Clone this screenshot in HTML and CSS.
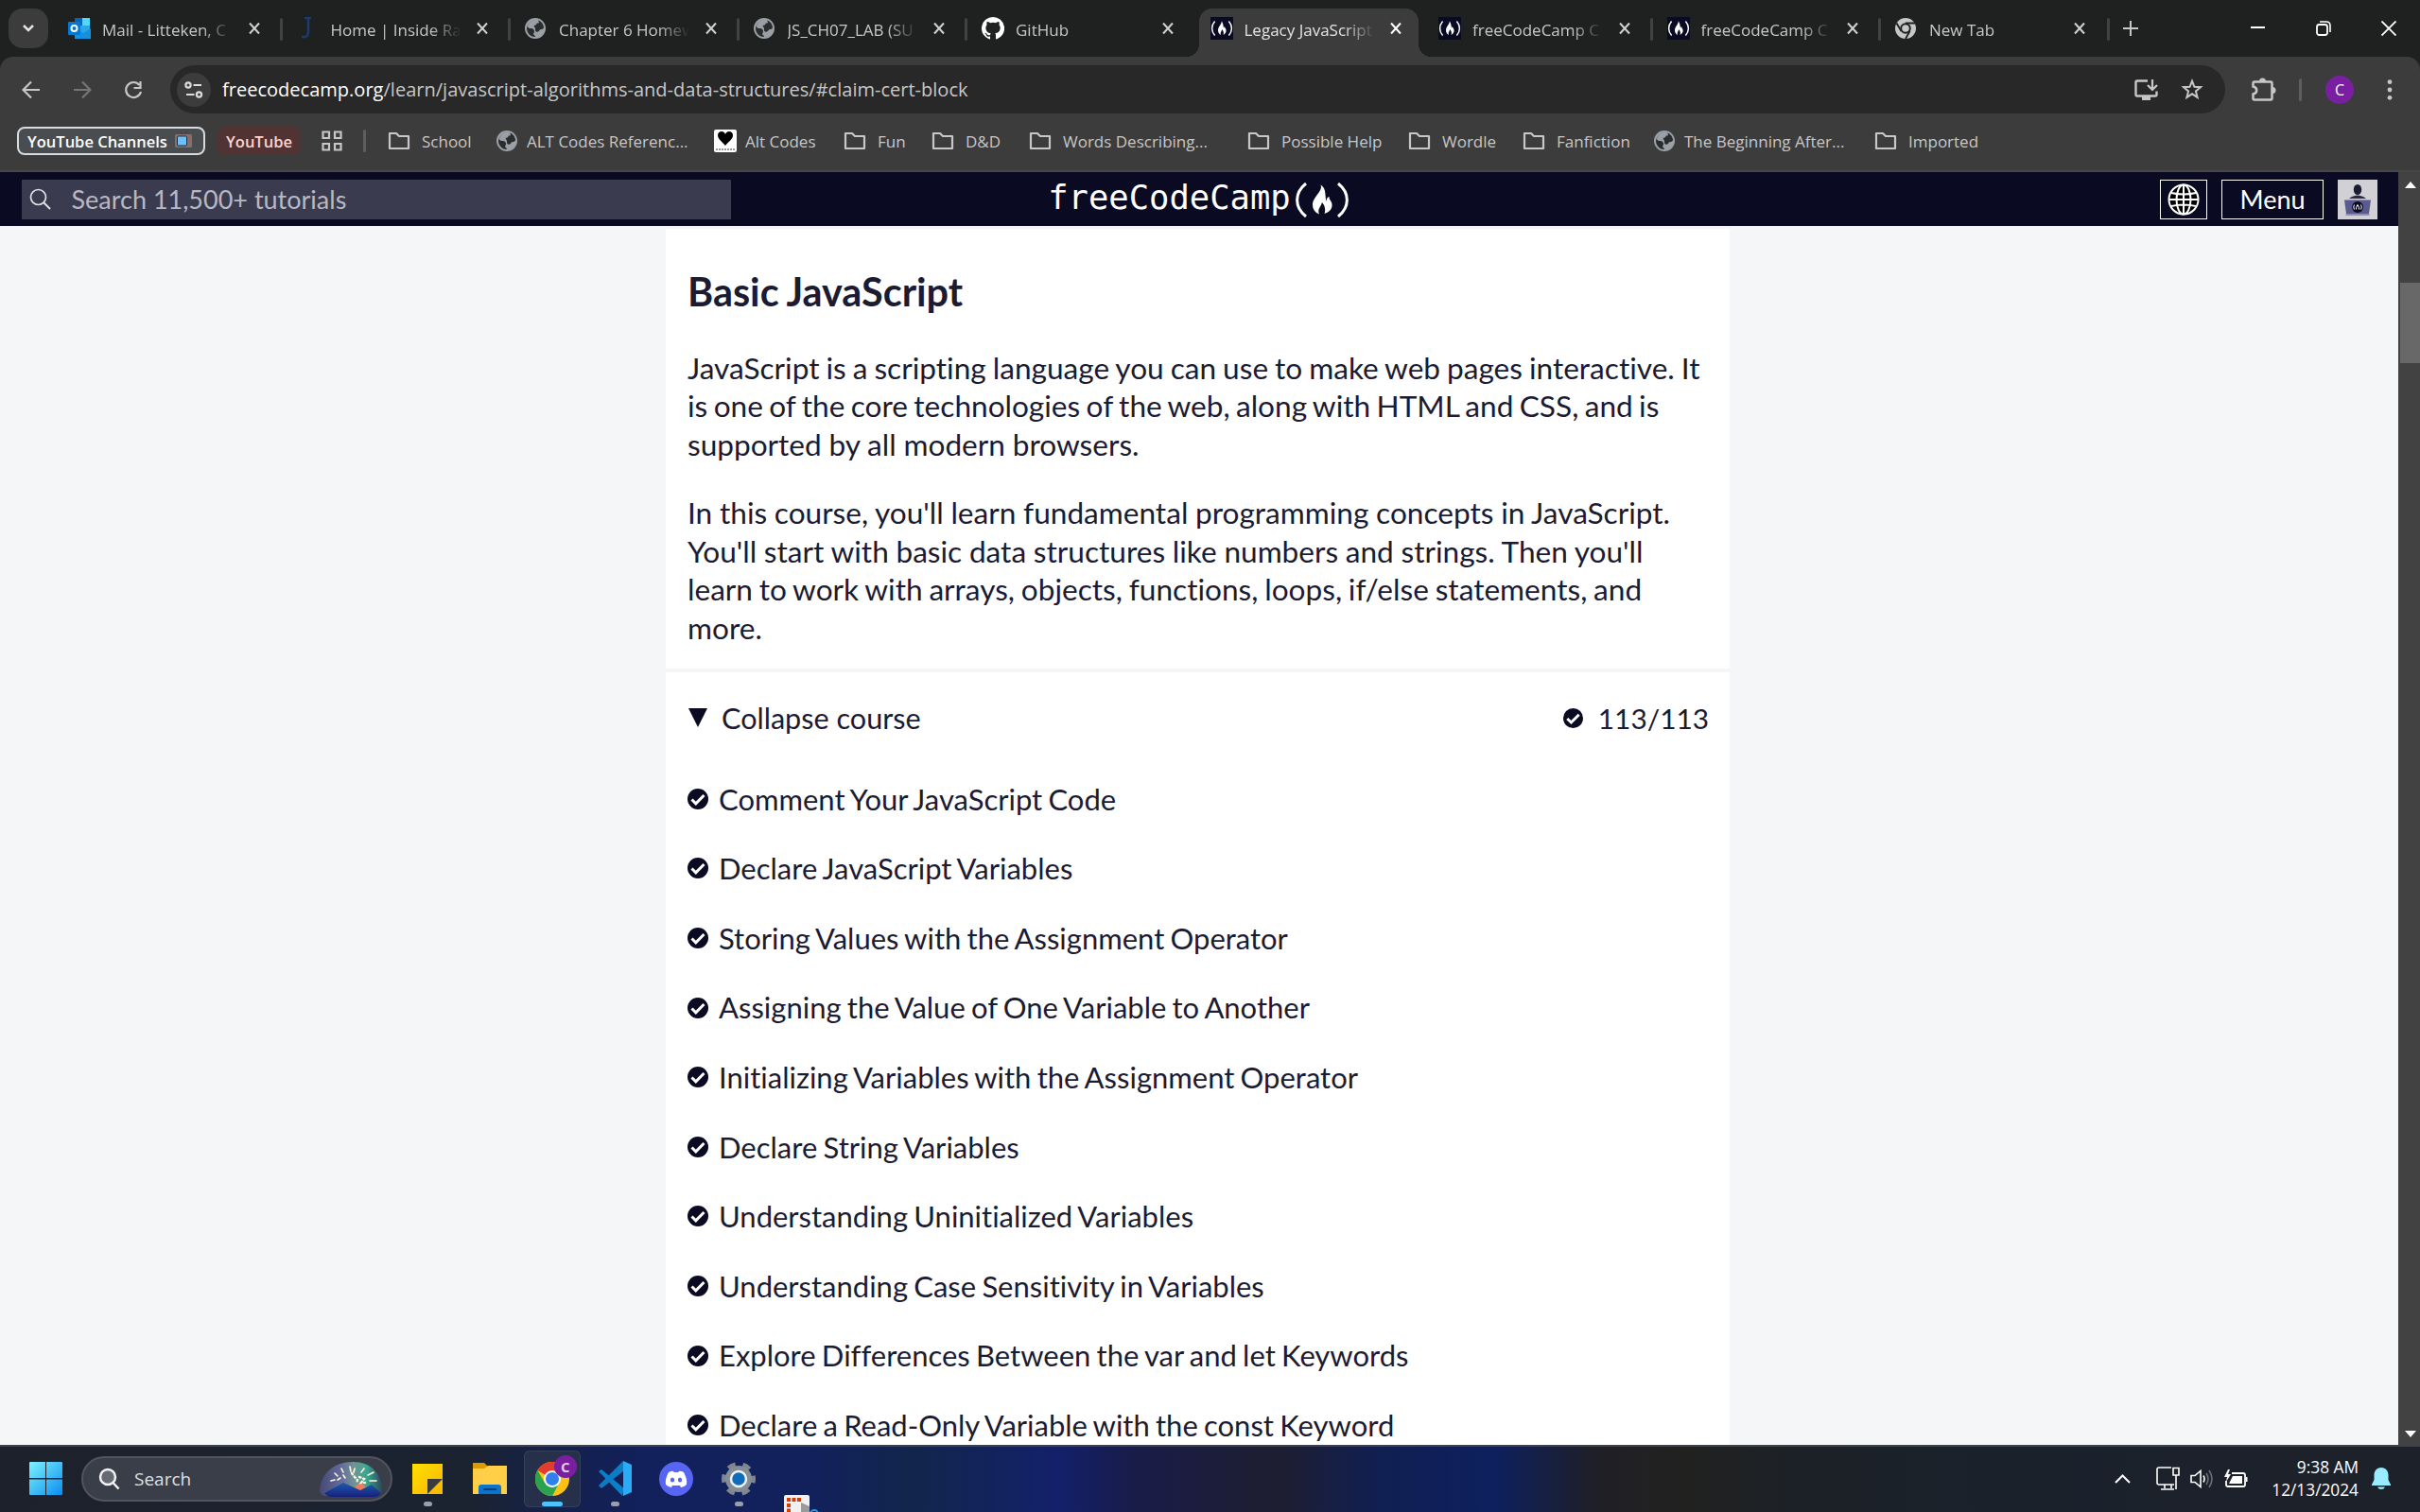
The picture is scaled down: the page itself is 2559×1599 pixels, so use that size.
FILE: index.html
```html
<!DOCTYPE html>
<html lang="en">
<head>
<meta charset="utf-8">
<title>Legacy JavaScript Algorithms and Data Structures</title>
<link rel="stylesheet" href="styles.css">
</head>
<body>
<svg class="defs" width="0" height="0" aria-hidden="true">
  <symbol id="x" viewBox="0 0 14 14"><path d="M2 1.5l10 11M12 1.5l-10 11" fill="none" stroke="currentColor" stroke-width="2"/></symbol>
  <symbol id="globe" viewBox="0 0 22 22"><circle cx="11" cy="11" r="11" fill="#9aa0a6"/><path d="M12 2c-4 0-7 2-9 6 0 3 2 3 4 3 1 0 3 1 3 3s-1 2-1 3 2 1 2 3c-6 0-9-5-9-9 1-6 6-9 10-9z" fill="#2b2c2d"/><path d="M14 2.500c4 1 6 5 6 8-1 2-3 1-4 2s-2 3-4 2 0-4-2-5c-1-1 0-2 1-2 2 0 1-2 2-2s2 0 2-1-1-1-1-2z" fill="#2b2c2d"/></symbol>
  <symbol id="fcc" viewBox="0 0 24 24"><rect width="24" height="24" fill="#0a0a23"/><path d="M4.600 4.500C.6 9 .6 15 4.600 19.500M19.400 4.500c4 4.500 4 10.500 0 15" fill="none" stroke="#fff" stroke-width="1.500"/><path d="M11.500 4c1.500 2.500-3.500 6-3.500 10 0 2.500 1.500 4.500 3 5-1-3 1-4 1.200-6 1.300 1.500 2.300 4 1.300 6 2-1 3.500-3 3-5.500-.3-1.500-1.500-2-1.500-3.500-.8.500-1 1.500-1 2C13.500 9 13.500 6 11.500 4z" fill="#fff"/></symbol>
  <symbol id="folder" viewBox="0 0 24 20"><path d="M2 2h7l3 3h10v13H2z" fill="none" stroke="#c7c7c7" stroke-width="2.200" stroke-linejoin="round"/></symbol>
  <symbol id="check" viewBox="0 0 22 22"><circle cx="11" cy="11" r="11" fill="#0a0a23"/><path d="M4.500 11.500l4.300 4.300L17.500 7" fill="none" stroke="#fff" stroke-width="3"/></symbol>
</svg>

<div class="tabstrip">
  <button class="tab-search"><svg width="14" height="10" viewBox="0 0 14 10"><path d="M2 2l5 5 5-5" fill="none" stroke="#e3e3e3" stroke-width="2.500"/></svg></button>
  <div class="tabs">
    <div class="tab"><svg class="fav" viewBox="0 0 24 24"><path d="M7 1h16v20H7z" fill="#28a8ea"/><path d="M7 1h8v8H7z" fill="#0364b8"/><path d="M15 1h8v8h-8z" fill="#50d9ff"/><path d="M7 12l9 5 8-5v11H7z" fill="#1490df"/><rect y="5" width="13" height="14" rx="1" fill="#0078d4"/><circle cx="6.500" cy="12" r="3" fill="none" stroke="#fff" stroke-width="2"/></svg><span class="title">Mail - Litteken, C</span><svg class="close"><use href="#x"/></svg></div>
    <div class="tab"><svg class="fav" viewBox="0 0 24 24"><path d="M8 1h7M12 1v15q0 6-7 5" fill="none" stroke="#1f3a6e" stroke-width="2.500"/></svg><span class="title">Home | Inside Ra</span><svg class="close"><use href="#x"/></svg></div>
    <div class="tab"><svg class="fav g"><use href="#globe"/></svg><span class="title">Chapter 6 Homew</span><svg class="close"><use href="#x"/></svg></div>
    <div class="tab"><svg class="fav g"><use href="#globe"/></svg><span class="title">JS_CH07_LAB (SU</span><svg class="close"><use href="#x"/></svg></div>
    <div class="tab noline"><svg class="fav" viewBox="0 0 16 16"><path fill="#fff" d="M8 0a8 8 0 0 0-2.530 15.590c.4.070.55-.17.55-.38v-1.490c-2.010.37-2.530-.49-2.690-.94-.09-.23-.48-.94-.82-1.130-.28-.15-.68-.52-.01-.53.63-.01 1.080.58 1.230.82.72 1.210 1.870.87 2.330.66.07-.52.28-.87.51-1.070-1.780-.2-3.640-.89-3.640-3.950 0-.87.31-1.590.82-2.150-.08-.2-.36-1.020.08-2.120 0 0 .67-.21 2.200.82a7.600 7.600 0 0 1 4 0c1.530-1.040 2.200-.82 2.200-.82.44 1.100.16 1.920.08 2.120.51.56.82 1.270.82 2.150 0 3.070-1.870 3.750-3.650 3.950.29.25.54.73.54 1.480v2.200c0 .21.150.46.55.38A8 8 0 0 0 8 0z"/></svg><span class="title">GitHub</span><svg class="close"><use href="#x"/></svg></div>
    <div class="tab active"><svg class="fav"><use href="#fcc"/></svg><span class="title">Legacy JavaScript</span><svg class="close"><use href="#x"/></svg></div>
    <div class="tab"><svg class="fav"><use href="#fcc"/></svg><span class="title">freeCodeCamp C</span><svg class="close"><use href="#x"/></svg></div>
    <div class="tab"><svg class="fav"><use href="#fcc"/></svg><span class="title">freeCodeCamp C</span><svg class="close"><use href="#x"/></svg></div>
    <div class="tab"><svg class="fav g" viewBox="0 0 22 22"><circle cx="11" cy="11" r="11" fill="#c7c7c7"/><circle cx="11" cy="11" r="4.800" fill="#c7c7c7" stroke="#1f2020" stroke-width="2"/><path d="M11 5.500h10M6.500 14L1.500 5.500M15.500 14L11 22" stroke="#1f2020" stroke-width="1.800"/></svg><span class="title">New Tab</span><svg class="close"><use href="#x"/></svg></div>
  </div>
  <svg class="plus" width="16" height="16" viewBox="0 0 16 16"><path d="M8 0v16M0 8h16" stroke="#c7c7c7" stroke-width="2"/></svg>
  <div class="win">
    <svg width="16" height="16" viewBox="0 0 16 16"><path d="M0 7h15" stroke="#fff" stroke-width="2"/></svg>
    <svg width="16" height="16" viewBox="0 0 16 16"><rect x="1" y="4" width="11" height="11" rx="2.500" fill="none" stroke="#fff" stroke-width="1.800"/><path d="M4 1h7q4 0 4 4v7" fill="none" stroke="#fff" stroke-width="1.600"/></svg>
    <svg width="16" height="16" viewBox="0 0 16 16"><path d="M.5.5l15 15M15.500.5l-15 15" stroke="#fff" stroke-width="1.800"/></svg>
  </div>
</div>

<div class="toolbar">
  <div class="nav-icons">
    <svg width="20" height="20" viewBox="0 0 20 20"><path d="M19 10H2M10 1.500L1.500 10l8.500 8.500" fill="none" stroke="#c7c7c7" stroke-width="2.200"/></svg>
    <svg width="20" height="20" viewBox="0 0 20 20"><path d="M1 10h17M10 1.500l8.500 8.500-8.500 8.500" fill="none" stroke="#757575" stroke-width="2.200"/></svg>
    <svg width="20" height="20" viewBox="0 0 20 20"><path d="M16.500 5A8 8 0 1 0 18 12M17.500 1v7h-7" fill="none" stroke="#c7c7c7" stroke-width="2.200"/></svg>
  </div>
  <div class="omnibox">
    <span class="site-info"><svg width="20" height="18" viewBox="0 0 20 18"><g fill="none" stroke="#dcdcdc" stroke-width="2.200"><circle cx="4" cy="4" r="2.600"/><path d="M9.500 4H18M2 14h8.500"/><circle cx="15.500" cy="14" r="2.600"/></g></svg></span>
    <span class="url"><b>freecodecamp.org</b>/learn/javascript-algorithms-and-data-structures/#claim-cert-block</span>
    <svg class="install" width="25" height="22" viewBox="0 0 25 22"><path d="M14 1.500H3Q1.500 1.500 1.500 3v13Q1.500 17.500 3 17.500h19q1.500 0 1.500-1.500v-3.500" fill="none" stroke="#c7c7c7" stroke-width="2.400"/><path d="M8 18h9v4H8z" fill="#c7c7c7"/><path d="M19 0v10M14 6l5 5 5-5" fill="none" stroke="#c7c7c7" stroke-width="2.200"/></svg>
    <svg width="24" height="23" viewBox="0 0 24 23"><path d="M12 2.700l2.400 6.100 6.600.4-5.100 4.200 1.700 6.500L12 16.300l-5.600 3.600 1.700-6.500L3 9.200l6.600-.4z" fill="none" stroke="#c7c7c7" stroke-width="2"/></svg>
  </div>
  <div class="tools">
    <svg width="26" height="26" viewBox="0 0 26 26"><path d="M3 4.500h17q1.500 0 1.500 1.500v16q0 1.500-1.500 1.500H3q-1.500 0-1.500-1.500v-4.500c5-1 5-7 0-8V6q0-1.500 1.500-1.500z" fill="none" stroke="#c7c7c7" stroke-width="2.500"/><path d="M8 4a3.500 3.500 0 0 1 7 0zM22 10a3.500 3.500 0 0 1 0 7z" fill="#c7c7c7"/></svg>
    <i class="sep"></i>
    <span class="profile">C</span>
    <svg width="6" height="22" viewBox="0 0 6 22"><g fill="#c7c7c7"><circle cx="3" cy="2.700" r="2.400"/><circle cx="3" cy="11" r="2.400"/><circle cx="3" cy="19.300" r="2.400"/></g></svg>
  </div>
</div>

<div class="bookmarks">
  <div><span class="group channels">YouTube Channels <svg width="18" height="20" viewBox="0 0 18 20"><path d="M5 0l4 4 4-4" fill="none" stroke="#444" stroke-width="1.500"/><rect x="0" y="3" width="18" height="14" rx="1.500" fill="#82716f"/><rect x="2.500" y="5" width="10" height="10" rx="1" fill="#6cc0fb" stroke="#233" stroke-width="1"/><path d="M14 6h2M14 9h2" stroke="#b55" stroke-width="1.200"/></svg></span></div>
  <div><span class="group yt">YouTube</span></div>
  <div><svg width="22" height="22" viewBox="0 0 22 22"><g fill="none" stroke="#c7c7c7" stroke-width="2.200"><path d="M1.500 1.500h6.500v6.500H1.500zM14 1.500h6.500v6.500H14zM1.500 14h6.500v6.500H1.500zM14 14h6.500v6.500H14z"/></g></svg></div>
  <div><i class="sep"></i></div>
  <div class="bm"><svg class="fo"><use href="#folder"/></svg>School</div>
  <div class="bm"><svg class="gl"><use href="#globe"/></svg>ALT Codes Referenc...</div>
  <div class="bm alt"><svg width="24" height="24" viewBox="0 0 24 24"><rect width="24" height="24" rx="2" fill="#fff"/><path d="M12 17C8 12 4 10 4 6c0-4 6-6 8-1 2-5 8-3 8 1 0 4-4 6-8 11z" fill="#000"/><path d="M2 21h20" stroke="#999" stroke-width="2" stroke-dasharray="2 1"/></svg>Alt Codes</div>
  <div class="bm"><svg class="fo"><use href="#folder"/></svg>Fun</div>
  <div class="bm"><svg class="fo"><use href="#folder"/></svg>D&amp;D</div>
  <div class="bm"><svg class="fo"><use href="#folder"/></svg>Words Describing...</div>
  <div class="bm"><svg class="fo"><use href="#folder"/></svg>Possible Help</div>
  <div class="bm"><svg class="fo"><use href="#folder"/></svg>Wordle</div>
  <div class="bm"><svg class="fo"><use href="#folder"/></svg>Fanfiction</div>
  <div class="bm"><svg class="gl"><use href="#globe"/></svg>The Beginning After...</div>
  <div class="bm"><svg class="fo"><use href="#folder"/></svg>Imported</div>
</div>

<div class="viewport">
  <div class="page">
    <header class="site-header">
      <div class="search"><svg width="24" height="24" viewBox="0 0 24 24"><circle cx="9.500" cy="9.500" r="8" fill="none" stroke="#e0e0e6" stroke-width="1.700"/><path d="M15 15l7 7" stroke="#e0e0e6" stroke-width="2"/></svg>Search 11,500+ tutorials</div>
      <div class="logo"><span>freeCodeCamp</span><svg width="56" height="37" viewBox="0 0 56 37"><path d="M11 1C-1.500 11-1.500 26 11 36M45 1c12.500 10 12.500 25 0 35" fill="none" stroke="#fff" stroke-width="3"/><path d="M26.500 2.500c3 6-8.500 13-8.500 21 0 5 3 8.500 7 10-2.500-6 2.500-8 2.800-12.500C31 24 32 29 30.500 33c5-1.500 8.500-5 8-10-.4-4-3-4-3-8-2.500.5-3 3-2.700 5C30.500 17 33.500 6 26.500 2.500z" fill="#fff"/></svg></div>
      <div class="actions">
        <button class="lang"><svg width="34" height="34" viewBox="0 0 34 34"><circle cx="17" cy="17" r="15.500" fill="#000"/><g fill="none" stroke="#fff" stroke-width="2"><circle cx="17" cy="17" r="15.500"/><ellipse cx="17" cy="17" rx="7.500" ry="15.500"/><path d="M17 1v32M1.500 17h31M4 10q13 3 26 0M4 24q13-3 26 0"/></g></svg></button>
        <button class="menu">Menu</button>
        <svg width="42" height="42" viewBox="0 0 42 42"><rect width="42" height="42" fill="#d0d0d5"/><ellipse cx="21" cy="10.500" rx="4.200" ry="5.500" fill="#1b1b32"/><path d="M12 20q3-3 9-3.500 6 .5 9 3.500z" fill="#2a2a40"/><path d="M7 21.500h28L33 36H9z" fill="#5a5a8f"/><path d="M8.500 36h25v2h-25z" fill="#8f8fbd"/><circle cx="21" cy="29" r="6" fill="#0a0a23"/><path d="M17.500 26.500q-1.500 2.500 0 5M24.500 26.500q1.500 2.500 0 5M19.500 31.500q-.5-2 1.500-5 2 3 1.500 5" fill="none" stroke="#fff"/></svg>
      </div>
    </header>
    <main>
      <section class="intro">
        <h3>Basic JavaScript</h3>
        <p class="lead">JavaScript is a scripting language you can use to make web pages interactive. It<br><span class="snug">is one of the core technologies of the web, along with HTML and CSS, and is</span><br><span class="roomy">supported by all modern browsers.</span></p>
        <p>In this course, you'll learn fundamental programming concepts in JavaScript.<br>You'll start with basic data structures like numbers and strings. Then you'll<br><span class="tight">learn to work with arrays, objects, functions, loops, if/else statements, and</span><br>more.</p>
      </section>
      <section class="course">
        <div class="toggle"><svg width="20" height="20" viewBox="0 0 20 20"><path d="M0 0h20L10 20z" fill="#0a0a23"/></svg><span>Collapse course</span><span class="count"><svg width="21" height="21"><use href="#check"/></svg>113/113</span></div>
        <ul>
          <li><svg><use href="#check"/></svg>Comment Your JavaScript Code</li>
          <li><svg><use href="#check"/></svg>Declare JavaScript Variables</li>
          <li><svg><use href="#check"/></svg>Storing Values with the Assignment Operator</li>
          <li><svg><use href="#check"/></svg>Assigning the Value of One Variable to Another</li>
          <li><svg><use href="#check"/></svg>Initializing Variables with the Assignment Operator</li>
          <li><svg><use href="#check"/></svg>Declare String Variables</li>
          <li><svg><use href="#check"/></svg>Understanding Uninitialized Variables</li>
          <li><svg><use href="#check"/></svg>Understanding Case Sensitivity in Variables</li>
          <li><svg><use href="#check"/></svg>Explore Differences Between the var and let Keywords</li>
          <li><svg><use href="#check"/></svg>Declare a Read-Only Variable with the const Keyword</li>
        </ul>
      </section>
    </main>
  </div>
  <div class="scrollbar">
    <svg width="12" height="7" viewBox="0 0 12 7"><path d="M0 7h12L6 0z" fill="#fff"/></svg>
    <i class="thumb"></i>
    <svg width="12" height="7" viewBox="0 0 12 7"><path d="M0 0h12L6 7z" fill="#fff"/></svg>
  </div>
</div>

<div class="taskbar">
  <svg class="start" width="35" height="35" viewBox="0 0 35 35"><defs><linearGradient id="w" x1="0" y1="0" x2="1" y2="1"><stop offset="0" stop-color="#7df3fd"/><stop offset="1" stop-color="#0a8df0"/></linearGradient></defs><path d="M0 1q0-1 1-1h16v17H0zM18 0h16q1 0 1 1v16H18zM0 18.500h17V35H1q-1 0-1-1zM18 18.500h17V34q0 1-1 1H18z" fill="url(#w)"/></svg>
  <div class="tsearch">
    <svg width="24" height="24" viewBox="0 0 24 24"><circle cx="10" cy="10" r="8" fill="#666a72" stroke="#f2f2f2" stroke-width="2.500"/><path d="M15.500 16l6 6.500" stroke="#f2f2f2" stroke-width="2.500"/></svg>
    <span>Search</span>
    <svg class="art" width="68" height="38" viewBox="0 0 68 38"><defs><linearGradient id="sky"><stop offset="0" stop-color="#484b80"/><stop offset=".35" stop-color="#7078b0"/><stop offset=".55" stop-color="#7fa8a8"/><stop offset=".75" stop-color="#39c3a0"/><stop offset="1" stop-color="#2a4a66"/></linearGradient><linearGradient id="mt" x1="0" y1="0" x2="0" y2="1"><stop offset="0" stop-color="#1c5cae"/><stop offset="1" stop-color="#17207c"/></linearGradient></defs><path d="M1 32C1 14 16 1 36 1s31 13 31 31q-1 5-6 5H9q-7 0-8-5z" fill="url(#sky)" opacity=".8"/><path d="M36 30l8-8 8 8-8 4z" fill="#f07a60"/><path d="M6 34L26 23l18 8 12-6 10 9q-2 4-8 4H14q-5 0-8-4z" fill="url(#mt)"/><g fill="none" stroke="#fffbe0" stroke-linecap="round"><path d="M13 21l4-1M17 13l3 3M24 8l2 4M33 6l1 5M20 20l3-2M26 15l2 3M45 12l3-4M52 15l6-3M54 21h7M38 8l-1 4" stroke-width="1.600"/><path d="M35 13l3 4 3 3-1 4M43 17l5 2-3 4 4 0" stroke-width="2.400" stroke-dasharray="1.500 3"/></g></svg>
  </div>
  <div class="app"><svg width="32" height="32" viewBox="0 0 32 32"><defs><linearGradient id="st" x1="0" y1="0" x2="1" y2="1"><stop offset="0" stop-color="#ffe100"/><stop offset="1" stop-color="#f9b500"/></linearGradient></defs><path d="M0 0h32v32H0z" fill="url(#st)"/><path d="M16 16h16L16 32z" fill="#3c3c3c"/></svg><i></i></div>
  <div class="app"><svg width="36" height="33" viewBox="0 0 36 33"><path d="M0 0h12l4 4H36v10H0z" fill="#dc9a00"/><path d="M0 6h12l4-3h20v30H0z" fill="#ffcf48"/><path d="M6 33V26q0-3 3-3h18q3 0 3 3v7z" fill="#0b74ca"/><path d="M11 28h14" stroke="#053d7c" stroke-width="2"/></svg></div>
  <div class="app on"><svg width="36" height="36" viewBox="0 0 36 36"><circle cx="18" cy="18" r="18" fill="#fbc116"/><path d="M18 18L2.400 9A18 18 0 0 1 33.600 9z" fill="#e33b2e"/><path d="M2.400 9A18 18 0 0 0 18 36l7.500-14L10 22z" fill="#2ba24c"/><circle cx="18" cy="18" r="9" fill="#fff"/><circle cx="18" cy="18" r="7" fill="#2f80ed"/></svg><b>C</b><i></i></div>
  <div class="app"><svg width="36" height="37" viewBox="0 0 36 37"><path d="M1 11l3-2 24 20-2 8z" fill="#0a7fcb"/><path d="M1 26l3 3L27 11V0z" fill="#0e7cc4"/><path d="M27 0l9 4v29l-9 4z" fill="#2aabf5"/></svg><i></i></div>
  <div class="app"><svg width="36" height="36" viewBox="0 0 36 36"><circle cx="18" cy="18" r="18" fill="#5865f2"/><path d="M10 11q4-2 5-1l1 1h4l1-1q2-1 5 1 4 7 3 13-3 3-6 3l-1-2h-8l-1 2q-3 0-6-3-1-6 3-13z" fill="#fff"/><ellipse cx="14" cy="19" rx="2.200" ry="2.500" fill="#5865f2"/><ellipse cx="22" cy="19" rx="2.200" ry="2.500" fill="#5865f2"/></svg></div>
  <div class="app"><svg width="36" height="36" viewBox="0 0 36 36"><circle cx="18" cy="18" r="15.500" fill="none" stroke="#7e868f" stroke-width="5" stroke-dasharray="8.230 8" stroke-dashoffset="4"/><circle cx="18" cy="18" r="11" fill="none" stroke="#858d96" stroke-width="6"/><circle cx="18" cy="18" r="8" fill="#0f6cbd" stroke="#f0f0f0" stroke-width="2.500"/></svg><i></i></div>
  <svg class="snip" width="36" height="18" viewBox="0 0 36 18"><rect width="27" height="30" rx="2" fill="#f1f1f1"/><path d="M18 8l9 4v6h-9z" fill="#9a9a9a"/><path d="M3 5h16" stroke="#d83b01" stroke-width="4" stroke-dasharray="4 1.500"/><path d="M5 9v9" stroke="#d83b01" stroke-width="4" stroke-dasharray="4 1.500"/><circle cx="32" cy="20" r="4" fill="none" stroke="#1e9be8" stroke-width="2"/></svg>
  <div class="tray">
    <svg width="17" height="10" viewBox="0 0 17 10"><path d="M1 9l7.500-7.500L16 9" fill="none" stroke="#fff" stroke-width="2"/></svg>
    <svg width="25" height="25" viewBox="0 0 25 25"><g fill="none" stroke="#fff" stroke-width="1.600"><path d="M16 1H3Q1 1 1 3v14q0 2 2 2h16M9 19v4M16 19v4M5 24h14M18 1.500h6V9h-6zM21 9v15"/></g></svg>
    <svg width="25" height="20" viewBox="0 0 25 20"><g fill="none" stroke="#fff" stroke-width="1.600"><path d="M1 6.500h4l6-5v17l-6-5H1zM14 6.500q2 3.500 0 7"/><path d="M17 4q4 6 0 12M20 1q6 9 0 18" stroke="#6a6f78"/></g></svg>
    <svg width="25" height="20" viewBox="0 0 25 20"><path d="M8 4h12q2 0 2 2v10q0 2-2 2H4q-2 0-2-2v-4" fill="none" stroke="#fff" stroke-width="1.800"/><path d="M9 7h10v8H5zM23 8h1.500v5H23zM4 0L0 8h3l-1 5 5-8H4l2-5z" fill="#fff"/></svg>
    <div class="clock">9:38 AM<br>12/13/2024</div>
    <svg width="20" height="24" viewBox="0 0 20 24"><path d="M10 0C5 0 2.500 4 2.500 8v5L0 18v1h20v-1l-2.500-5V8c0-4-2.500-8-7.500-8zM6 20.500h8q-1 2.500-4 2.500t-4-2.500z" fill="#99ebff"/></svg>
  </div>
</div>
</body>
</html>
```
FILE: styles.css
```css
* { box-sizing: border-box; }
html, body { margin: 0; height: 100%; overflow: hidden; }
body {
  display: flex;
  flex-direction: column;
  width: 2559px;
  height: 1599px;
  background: #1f2020;
  font-family: "Open Sans", sans-serif;
  font-size: 17px;
  font-variant-ligatures: none;
  color: #c7c7c7;
}
svg { display: block; flex: none; }
button { font: inherit; color: inherit; background: none; border: 0; padding: 0; display: flex; align-items: center; justify-content: center; }
.defs { position: absolute; }

/* Tab strip */
.tabstrip { height: 60px; flex: none; display: flex; background: #1f2120; padding-left: 9px; }
.tab-search { width: 42px; height: 42px; margin: 9px 9px 0 0; border-radius: 15px; background: #3c3c3c; }
.tabs { display: flex; padding-top: 9px; }
.tab { position: relative; width: 241.500px; height: 51px; display: flex; align-items: center; padding: 0 26px 9px 12px; }
.tab:not(.active)::after { content: ""; position: absolute; right: 3px; top: 10px; width: 3px; height: 24px; border-radius: 2px; background: #414242; }
.tab.noline::after { display: none; }
.fav { width: 24px; height: 24px; margin-right: 12px; }
.fav.g { width: 22px; height: 22px; margin-right: 14px; }
.title {
  flex: 1; width: 0; white-space: nowrap; margin-right: 12px; padding-top: 2px;
  -webkit-mask-image: linear-gradient(90deg, #000 105px, transparent 138px);
  mask-image: linear-gradient(90deg, #000 105px, transparent 138px);
}
.close { width: 14px; height: 14px; color: #d0d0d0; }
.tab:last-child { padding-right: 27.500px; }
.active { background: #3c3c3c; border-radius: 14px 14px 0 0; color: #e3e3e3; width: 232px; margin: 0 9.500px 0 0; padding-right: 16.500px; }
.active .close { color: #fff; }
.active::before, .active::after { content: ""; position: absolute; bottom: 0; width: 14px; height: 14px; }
.active::before { left: -14px; background: radial-gradient(circle at 0 0, transparent 14px, #3c3c3c 14.500px); }
.active::after { right: -14px; background: radial-gradient(circle at 100% 0, transparent 14px, #3c3c3c 14.500px); }
.plus { margin: 22px 0 0 11px; }
.win { display: flex; gap: 53px; margin: 22px 25px 0 auto; }

/* Toolbar */
.toolbar { height: 60px; flex: none; display: flex; align-items: center; background: #3c3c3c; border-radius: 14px 14px 0 0; }
.nav-icons { display: flex; gap: 34px; width: 180px; padding: 9px 0 0 23px; }
.omnibox { width: 2173px; height: 51px; margin-top: 9px; border-radius: 26px; background: #282828; display: flex; align-items: center; padding: 0 23px 0 7px; }
.site-info { width: 36px; height: 36px; border-radius: 50%; background: #3c3c3c; display: grid; place-items: center; margin-right: 12px; }
.url { font-size: 20.050px; flex: 1; }
.url b { font-weight: 400; color: #fff; }
.install { margin-right: 24px; }
.tools { display: flex; align-items: center; padding: 9px 0 0 28px; flex: 1; }
.sep { display: block; width: 3px; height: 24px; border-radius: 2px; background: #5e5e5e; }
.tools .sep { margin: 0 25px 0 24px; }
.profile { width: 30px; height: 30px; border-radius: 50%; background: #7b1fa2; color: #fff; font-size: 16px; display: grid; place-items: center; margin-right: 35px; }

/* Bookmarks */
.bookmarks {
  height: 62px; flex: none; background: #3c3c3c; border-bottom: 2px solid #474747; padding: 0 0 2px 18px;
  display: grid; align-items: center;
  grid-template-columns: 212px 110px 44px 26px 115px 230px 137px 93px 103px 231px 170px 121px 139px 233px 1fr;
}
.bm, .group { display: flex; align-items: center; white-space: nowrap; }
.fo { width: 24px; height: 20px; margin-right: 12px; }
.gl { width: 22px; height: 22px; margin-right: 10px; }
.alt svg { margin-right: 9px; }
.group { height: 30px; width: max-content; border-radius: 8px; font-weight: 600; font-size: 16.500px; color: #fff; }
.channels { width: 199px; border: 2px solid #d8dbde; background: #4a4d50; padding-left: 9px; gap: 8px; }
.yt { background: #503332; color: #ffd3ce; width: 88px; justify-content: center; }

/* Web page */
.viewport { height: 1346px; flex: none; display: flex; font-family: "Lato", sans-serif; }
.page { width: 2536px; overflow: hidden; background: #f5f6f7; color: #1b1b32; }
.site-header { height: 57px; background: #0a0a23; display: grid; grid-template-columns: 1fr auto 1fr; align-items: center; padding: 0 22px 0 23px; font-size: 27px; color: #fff; }
.search { width: 750px; height: 42px; background: #3b3b4f; color: #b8b8c4; display: flex; align-items: center; gap: 20.500px; padding-left: 8px; }
.logo { display: flex; align-items: center; font-family: "DejaVu Sans Mono", monospace; font-size: 35.500px; line-height: 40px; }
.logo svg { margin: 2px 0 0 5px; }
.logo span { margin: -3px 0 0 -3px; }
.actions { display: flex; justify-content: flex-end; gap: 15px; }
.lang, .menu { height: 42px; border: 1.500px solid #fff; }
.lang { width: 50px; }
.menu { width: 108px; }

main { width: 1125px; margin: 3px 0 0 704px; font-size: 30.600px; line-height: 40.500px; }
.intro, .course { background: #fff; padding: 42px 22px 0 23px; }
.intro { height: 465px; font-size: 31.600px; margin-bottom: 4px; white-space: nowrap; word-spacing: -.4px; }
h3 { margin: 0 0 35.500px; font-size: 41.400px; line-height: 49px; word-spacing: -1px; }
p { margin: 0 0 32px; }
.lead { word-spacing: -1.100px; }
.snug { word-spacing: -1.700px; }
.roomy { word-spacing: -.3px; }
.tight { word-spacing: -1.300px; }
.course { height: 900px; padding-top: 28.500px; }
.toggle { display: flex; align-items: center; margin-bottom: 44.500px; }
.toggle > svg { margin: -2px 15px 0 1px; }
.count { margin-left: auto; display: flex; align-items: center; gap: 16px; font-size: 29.800px; }
ul { list-style: none; margin: 0; padding: 0; font-size: 31px; word-spacing: -1.700px; }
li { height: 40.600px; margin-bottom: 33px; display: flex; align-items: center; }
li svg { width: 22px; height: 22px; margin: 0 11px 0 0; }

.scrollbar { width: 23px; background: #424242; display: flex; flex-direction: column; padding: 10px 0 8px 2px; }
.scrollbar svg { margin-left: 5px; }
.thumb { height: 85px; margin: 100px 0 auto; background: #686868; }

/* Taskbar */
.taskbar {
  flex: 1; display: flex; align-items: center; padding: 0 0 2px 31px; border-top: 2px solid #3d4249; color: #fff;
  background: linear-gradient(90deg, #1d212b 0, #1b2331 500px, #14214c 590px, #12205c 680px, #12205c 850px, #11264c 968px, #13206a 1121px, #191c48 1200px, #1e1e30 1350px, #111f50 1450px, #0d205e 1580px, #201f26 1690px, #222120 1775px, #1c2128 1912px, #1b212c 2200px, #1e212a 2559px);
}
.start { margin-right: 20px; }
.tsearch { width: 329px; height: 48px; border-radius: 24px; border: 2px solid #50545e; background: #3a3e49; display: flex; align-items: center; padding: 0 8px 0 16px; margin-right: 4px; font-size: 19px; color: #dfe0e2; }
.tsearch span { flex: 1; padding-left: 14px; }
.app { position: relative; width: 60px; height: 60px; margin: 0 2.950px; display: grid; place-items: center; border-radius: 6px; }
.app i { position: absolute; bottom: 1px; left: 26px; width: 9px; height: 5px; border-radius: 3px; background: #9a9fb0; }
.app.on { background: #26304a; box-shadow: inset 0 0 0 1px #37405a; }
.app.on i { left: 19px; width: 22px; background: #4cc2ff; }
.app b { position: absolute; left: 32px; top: 5px; width: 24px; height: 24px; border-radius: 50%; background: #7b1fa2; color: #e8c8f0; font-size: 15px; line-height: 24px; text-align: center; }
.snip { align-self: flex-end; margin: 0 0 -2px 15px; }
.tray { margin: 0 31px 0 auto; display: flex; align-items: center; }
.tray svg:nth-child(1) { margin-right: 27px; }
.tray svg:nth-child(2), .tray svg:nth-child(3) { margin-right: 11px; }
.clock { width: 117px; text-align: right; line-height: 24px; font-size: 17.300px; margin-right: 14px; }
```
